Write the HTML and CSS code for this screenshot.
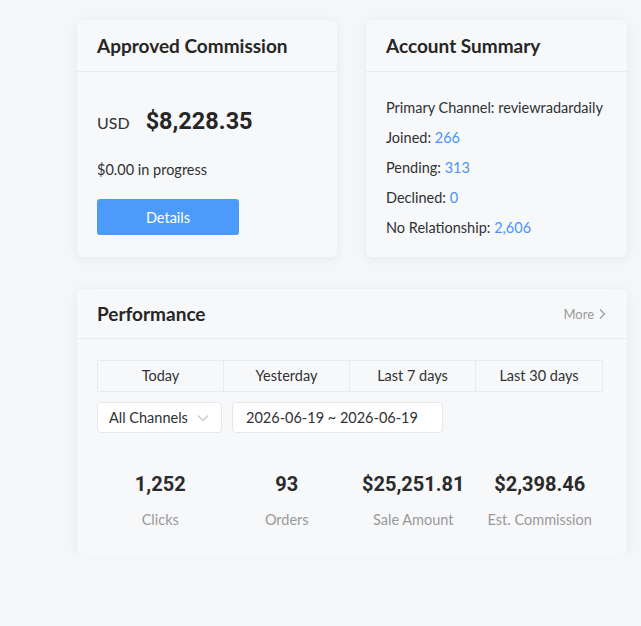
FILE: index.html
```html
<!DOCTYPE html>
<html lang="en">
  <head>
    <meta charset="UTF-8" />
    <meta name="viewport" content="width=device-width, initial-scale=1.0" />
    <title>Dashboard</title>
    <link rel="stylesheet" href="styles.css">
  </head>
  <body>
    <div class="page">
      <div class="top-row">
        <div class="card commission">
          <div class="card-header">
            <h2>Approved Commission</h2>
          </div>
          <div class="card-body">
            <div class="amount">
              <span class="currency">USD</span>
              <span class="value">$8,228.35</span>
            </div>
            <p class="progress">$0.00 in progress</p>
            <button class="details-btn">Details</button>
          </div>
        </div>

        <div class="card summary">
          <div class="card-header">
            <h2>Account Summary</h2>
          </div>
          <div class="card-body">
            <p>Primary Channel: reviewradardaily</p>
            <p>Joined: <a href="#">266</a></p>
            <p>Pending: <a href="#">313</a></p>
            <p>Declined: <a href="#">0</a></p>
            <p>No Relationship: <a href="#">2,606</a></p>
          </div>
        </div>
      </div>

      <div class="card performance">
        <div class="card-header">
          <h2>Performance</h2>
          <a class="more" href="#">More
            <svg width="10" height="12" viewBox="0 0 10 12"><path d="M3 1.5 L7.5 6 L3 10.5" fill="none" stroke="#999" stroke-width="1.2"/></svg>
          </a>
        </div>
        <div class="card-body">
          <div class="tabs">
            <div class="tab">Today</div>
            <div class="tab">Yesterday</div>
            <div class="tab">Last 7 days</div>
            <div class="tab">Last 30 days</div>
          </div>
          <div class="filters">
            <div class="select">
              <span>All Channels</span>
              <svg width="12" height="8" viewBox="0 0 12 8"><path d="M1 1.5 L6 6.5 L11 1.5" fill="none" stroke="#c0c4cc" stroke-width="1.1"/></svg>
            </div>
            <div class="date-range">2026-06-19 ~ 2026-06-19</div>
          </div>
          <div class="stats">
            <div class="stat">
              <div class="stat-value">1,252</div>
              <div class="stat-label">Clicks</div>
            </div>
            <div class="stat">
              <div class="stat-value">93</div>
              <div class="stat-label">Orders</div>
            </div>
            <div class="stat">
              <div class="stat-value">$25,251.81</div>
              <div class="stat-label">Sale Amount</div>
            </div>
            <div class="stat">
              <div class="stat-value">$2,398.46</div>
              <div class="stat-label">Est. Commission</div>
            </div>
          </div>
        </div>
      </div>
    </div>
  </body>
</html>
```

FILE: styles.css
```css
body {
  margin: 0;
  background-color: #f5f6f7;
  color: #303133;
  font-family: Lato, "Noto Sans", sans-serif;
  font-size: 14.5px;
}
.page {
  width: 550px;
  padding: 20px 0 0 77px;
}
.top-row {
  display: flex;
  gap: 29px;
  margin-bottom: 32px;
}
.card {
  background-color: #f7f8fa;
  border-radius: 6px;
  box-shadow: 0 2px 12px rgba(0, 0, 0, 0.06);
}
.commission {
  width: 260px;
  height: 237px;
}
.summary {
  width: 261px;
  height: 237px;
}
.card-header {
  height: 51px;
  padding: 0 20px;
  border-bottom: 1px solid #e9ebef;
  display: flex;
  align-items: center;
  justify-content: space-between;
}
.card-header h2 {
  margin: 0;
  font-size: 19px;
  font-weight: bold;
  color: #262626;
}
.performance .card-header {
  height: 49px;
}
.card-body {
  padding: 0 20px;
}
.amount {
  display: flex;
  align-items: baseline;
  gap: 16px;
  padding-top: 35px;
  height: 36px;
}
.currency {
  font-size: 16px;
}
.value {
  font-family: Roboto, sans-serif;
  font-size: 23.5px;
  font-weight: bold;
  color: #262626;
}
.progress {
  margin: 17px 0 19px;
  line-height: 20px;
}
.details-btn {
  width: 142px;
  height: 36px;
  border: none;
  border-radius: 3px;
  background-color: #4c9bfb;
  color: #fff;
  font-family: inherit;
  font-size: 14.5px;
  cursor: pointer;
}
.summary .card-body {
  padding-top: 21px;
}
.summary p {
  margin: 0;
  line-height: 30px;
}
.summary a {
  color: #4a94f8;
  text-decoration: none;
}
.performance {
  height: 265px;
}
.more {
  display: flex;
  align-items: center;
  gap: 3px;
  color: #999;
  font-size: 13px;
  text-decoration: none;
}
.performance .card-body {
  padding-top: 21px;
}
.tabs {
  display: grid;
  grid-template-columns: repeat(4, 1fr);
  width: 506px;
  border: 1px solid #e9ebef;
  box-sizing: border-box;
}
.tab {
  height: 30px;
  line-height: 30px;
  text-align: center;
  border-right: 1px solid #e9ebef;
}
.tab:last-child {
  border-right: none;
}
.filters {
  display: flex;
  gap: 10px;
  margin-top: 10px;
}
.select,
.date-range {
  height: 31px;
  box-sizing: border-box;
  background-color: #fff;
  border: 1px solid #e4e7ed;
  border-radius: 4px;
  display: flex;
  align-items: center;
}
.select {
  width: 125px;
  padding: 0 12px 0 11px;
  justify-content: space-between;
}
.date-range {
  width: 211px;
  padding-left: 13px;
}
.stats {
  display: grid;
  grid-template-columns: repeat(4, 1fr);
  width: 506px;
  margin-top: 37px;
}
.stat {
  text-align: center;
}
.stat-value {
  font-family: Roboto, sans-serif;
  font-size: 20px;
  font-weight: bold;
  color: #2b2b2b;
  line-height: 28px;
}
.stat-label {
  margin-top: 12px;
  color: #999;
  line-height: 20px;
}
```
